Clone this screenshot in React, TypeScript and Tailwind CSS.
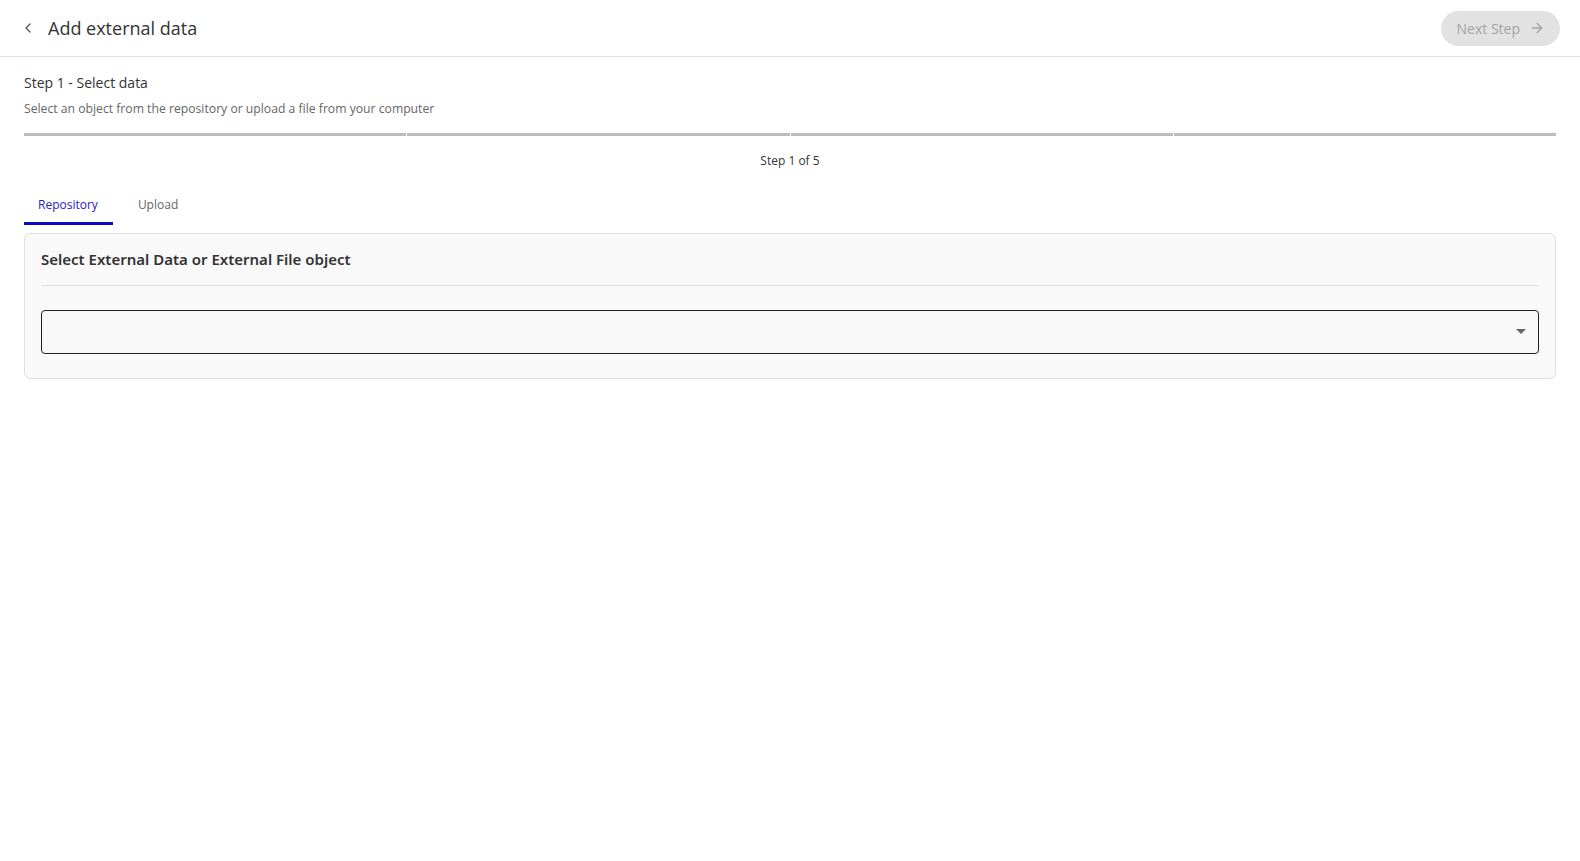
import React, { useState } from "react";
import { ChevronLeft, ArrowRight } from "lucide-react";

const App: React.FC = () => {
  const [tab, setTab] = useState<"repository" | "upload">("repository");
  const steps = 4;

  return (
    <div className="min-h-screen w-full bg-white text-[#333] font-['Open_Sans',sans-serif]">
      {/* Header */}
      <div className="flex h-[57px] items-center justify-between border-b border-[#e3e3e3] pl-[18px] pr-[20px]">
        <div className="flex items-center gap-[10px]">
          <button className="flex h-[20px] w-[20px] items-center justify-center text-[#555]">
            <ChevronLeft size={16} strokeWidth={2} />
          </button>
          <h1 className="text-[18px] leading-none text-[#333]">Add external data</h1>
        </div>
        <button
          disabled
          className="flex h-[35px] items-center gap-[9px] rounded-full bg-[#e2e2e2] pl-[16px] pr-[15px] text-[14px] text-[#a3a3a3]"
        >
          Next Step
          <ArrowRight size={16} strokeWidth={2} />
        </button>
      </div>

      <div className="px-[24px] pt-[17px]">
        {/* Step heading */}
        <div className="text-[14px] leading-[18px] text-[#333]">Step 1 - Select data</div>
        <div className="mt-[9px] text-[12.2px] leading-[16px] text-[#666]">
          Select an object from the repository or upload a file from your computer
        </div>

        {/* Progress */}
        <div className="mt-[16px] flex gap-[1px]">
          {Array.from({ length: steps }).map((_, i) => (
            <div key={i} className="h-[3px] flex-1 bg-[#bcbcbc]" />
          ))}
        </div>
        <div className="mt-[17px] text-center text-[12px] leading-[16px] text-[#333]">Step 1 of 5</div>

        {/* Tabs */}
        <div className="mt-[18px] flex">
          <button
            onClick={() => setTab("repository")}
            className={`h-[38px] border-b-[3px] pl-[14px] pr-[15px] text-[12px] ${
              tab === "repository" ? "border-[#0b0bc4] text-[#2323c8]" : "border-transparent text-[#666]"
            }`}
          >
            Repository
          </button>
          <button
            onClick={() => setTab("upload")}
            className={`ml-[11px] h-[38px] border-b-[3px] px-[14px] text-[12px] ${
              tab === "upload" ? "border-[#0b0bc4] text-[#2323c8]" : "border-transparent text-[#666]"
            }`}
          >
            Upload
          </button>
        </div>

        {/* Card */}
        <div className="mt-[8px] rounded-[6px] border border-[#e0e0e0] bg-[#f9f9f9] px-[16px] pb-[24px]">
          <div className="flex h-[52px] items-center border-b border-[#dedede] text-[15px] font-semibold text-[#333] font-['Noto_Sans',sans-serif]">
            Select External Data or External File object
          </div>
          <div className="mt-[24px] flex h-[44px] items-center justify-end rounded-[4px] border border-[#1e1e2a] bg-[#f9f9f9] pr-[12px]">
            <svg width="10" height="6" viewBox="0 0 10 6">
              <path d="M0 0 L10 0 L5 5 Z" fill="#666" />
            </svg>
          </div>
        </div>
      </div>
    </div>
  );
};

export default App;
